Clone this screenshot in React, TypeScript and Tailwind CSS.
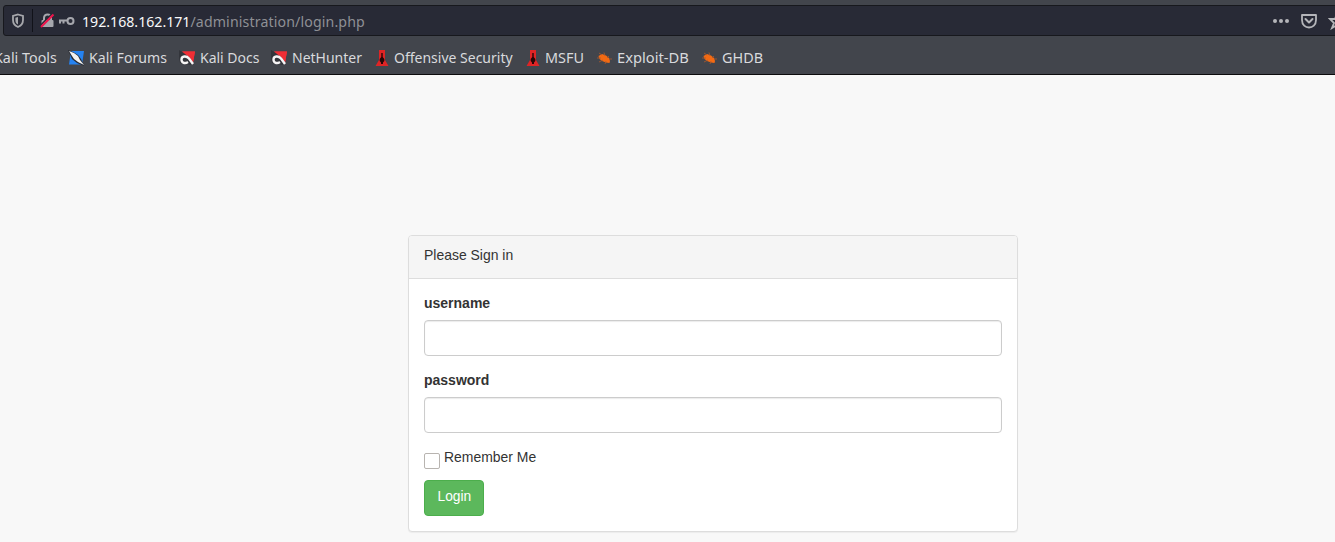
import type { ReactNode } from "react";

const KaliBlue = () => (
  <svg width="16" height="16" viewBox="0 0 16 16">
    <path d="M3 1H16L14 14.5H1Z" fill="#2583f2" />
    <path d="M0 0L5 2L10 5L13 9L16 16L9 13L4 9Z" fill="#272a31" />
    <path d="M1 1L6 3L10 6L12 10L16 15L10 12L6 9L4 6Z" fill="#f2f2f2" />
  </svg>
);

const KaliRed = () => (
  <svg width="16" height="16" viewBox="0 0 16 16">
    <path d="M3 1.5H16L14 13H2Z" fill="#f02e35" />
    <path d="M0 0L5 3L12 7L14 13L12 15L1 13L0 8Z" fill="#33353b" />
    <path d="M4 1.5H16L14 12L10 7L6 4Z" fill="#f02e35" />
    <path d="M14 14L10 8.5C7.5 5.5 2.5 6 2.5 9.5C2.5 13 6 14 9 12" fill="none" stroke="#f6f4f5" strokeWidth="2.4" />
  </svg>
);

const Tower = () => (
  <svg width="14" height="18" viewBox="0 0 14 18">
    <path d="M4 1H10V11L13.5 17H.5L4 11Z" fill="#df2425" />
    <path d="M6.3 4H7.7V8L9.3 10V12L8 13.5V15H6V13.5L4.7 12V10L6.3 8Z" fill="#260708" />
  </svg>
);

const Bug = () => (
  <svg width="15" height="14" viewBox="0 0 15 14">
    <path d="M1.5 5L5 3L9 4.5L12 7L13 10L12.5 12L9 11.5L5 10L2.5 8Z" fill="#f36a13" />
    <path d="M2 2L5 4M7 1.5L8 5M12 5L10 7M12 8L15 8M0 7L4 7M2 11L6 9M8 13L9 10" stroke="#ad592c" strokeWidth=".8" />
  </svg>
);

function Bookmark({ icon, label, box, textBox }: { icon?: ReactNode; label: string; box: string; textBox: string }) {
  return (
    <div className={`flex h-full shrink-0 items-center ${box}`}>
      {icon && <span className="flex w-[21px] shrink-0 items-center">{icon}</span>}
      <span className={`inline-block origin-left whitespace-nowrap ${textBox}`}>{label}</span>
    </div>
  );
}

export default function App() {
  return (
    <div className="h-[542px] w-full overflow-hidden bg-[#f8f8f8] font-['Liberation_Sans',sans-serif] text-[14px] text-[#333]">
      <header className="h-[75px] overflow-hidden border-b border-[#0c0c0d] bg-[#42454c] pt-[5px] font-['Noto_Sans',sans-serif] text-[#d9dadd]">
        <div className="ml-[3px] flex h-[31px] w-[1360px] items-center rounded-[3px] border border-[#17181d] bg-[#282a36]">
          <svg className="ml-[7px] shrink-0" width="14" height="16" viewBox="0 0 14 16" fill="none">
            <path d="M7 1.5L12 3V7C12 10.5 10 12.8 7 14C4 12.8 2 10.5 2 7V3Z" stroke="#a6a7ab" strokeWidth="1.8" />
            <path d="M7 4V11.5C5 10.5 4.4 9 4.4 7V4.8Z" fill="#a6a7ab" />
          </svg>
          <span className="ml-[7px] h-[23px] w-px shrink-0 bg-[#111219]" />
          <svg className="ml-[7px] shrink-0" width="16" height="16" viewBox="0 0 16 16" fill="none">
            <path d="M4 7V5C4 .2 11 .2 11 5V7" stroke="#a6a7ad" strokeWidth="2" />
            <rect x="1.5" y="7" width="12" height="7" rx="1" fill="#a6a7ad" />
            <path d="M-.2 13L12.5 .3" stroke="#282a36" strokeWidth="1.5" />
            <path d="M1 14L13.5 1.5" stroke="#f0134b" strokeWidth="2" />
          </svg>
          <svg className="ml-[2px] shrink-0" width="17" height="12" viewBox="0 0 17 12" fill="none" stroke="#a6a7ad">
            <circle cx="12.5" cy="6" r="3" strokeWidth="2" />
            <path d="M10 5.5H1M2 6V8.5M5.5 6V8.5" strokeWidth="2" />
          </svg>
          <span className="ml-[7px] w-[1190px] shrink-0 whitespace-nowrap text-[15px] text-[#8f9095]">
            <span className="inline-block origin-left translate-y-px scale-x-[0.943]"><span className="text-[#f9f9fa]">192.168.162.171</span><span className="tracking-[0.14px]">/administration/login.php</span></span>
          </span>
          <svg className="shrink-0" width="18" height="6" viewBox="0 0 18 6" fill="#b5b6ba">
            <circle cx="3" cy="3" r="2" /><circle cx="9" cy="3" r="2" /><circle cx="15" cy="3" r="2" />
          </svg>
          <svg className="ml-[10px] shrink-0" width="18" height="16" viewBox="0 0 18 16" fill="none" stroke="#b5b6ba" strokeWidth="1.8" strokeLinejoin="round">
            <path d="M2 2H16V7C16 17 2 17 2 7Z" /><path d="M5.5 6L9 9.5L12.5 6" strokeWidth="2" strokeLinecap="round" />
          </svg>
          <svg className="ml-[10px] shrink-0" width="18" height="18" viewBox="0 0 18 18" fill="none" stroke="#b5b6ba" strokeWidth="1.8">
            <path d="M9 2L11 7L16 7L12 11L14 16L9 13L4 16L6 11L2 7L7 7Z" />
          </svg>
        </div>
        <nav className="flex h-[38px] items-center pt-[5px] text-[15px]">
          <Bookmark label="Kali Tools" box="-ml-[6px] w-[74px]" textBox="scale-x-[0.955]" />
          <Bookmark icon={<KaliBlue />} label="Kali Forums" box="w-[111px]" textBox="scale-x-[0.94]" />
          <Bookmark icon={<KaliRed />} label="Kali Docs" box="w-[92px]" textBox="scale-x-[0.933]" />
          <Bookmark icon={<KaliRed />} label="NetHunter" box="w-[104px]" textBox="scale-x-[0.933]" />
          <Bookmark icon={<Tower />} label="Offensive Security" box="w-[151px]" textBox="-ml-[2px] scale-x-[0.933]" />
          <Bookmark icon={<Tower />} label="MSFU" box="w-[71px]" textBox="-ml-[2px] scale-x-[0.96]" />
          <Bookmark icon={<Bug />} label="Exploit-DB" box="w-[105px]" textBox="-ml-px scale-x-[0.98]" />
          <Bookmark icon={<Bug />} label="GHDB" box="w-[70px]" textBox="-ml-px scale-x-[0.96]" />
        </nav>
      </header>
      <main className="flex pl-[408px] pt-[160px]">
        <section className="h-[297px] w-[610px] rounded-[4px] border border-[#ddd] bg-white shadow-[0_1px_1px_rgba(0,0,0,0.05)]">
          <h1 className="h-[43px] rounded-t-[3px] border-b border-[#ddd] bg-[#f5f5f5] px-[15px] pt-[9px] text-[15px] leading-5">
            <span className="inline-block origin-left scale-x-[0.93]">Please Sign in</span>
          </h1>
          <form className="px-[15px] pt-[14px]" onSubmit={(e) => e.preventDefault()}>
            <label htmlFor="username" className="block h-[27px] font-bold leading-5">username</label>
            <input id="username" className="block h-[36px] w-full rounded-[4px] border border-[#ccc] bg-white px-3 shadow-[inset_0_1px_1px_rgba(0,0,0,0.08)]" />
            <label htmlFor="password" className="mt-[14px] block h-[27px] font-bold leading-5">password</label>
            <input id="password" type="password" className="block h-[36px] w-full rounded-[4px] border border-[#ccc] bg-white px-3 shadow-[inset_0_1px_1px_rgba(0,0,0,0.08)]" />
            <label className="mt-[14px] flex h-[32px] items-start gap-[4px] text-[15px] leading-5">
              <input type="checkbox" className="mt-[6px] h-[16px] w-[16px] appearance-none rounded-[2px] border border-[#b8b4b0] bg-white" />
              <span className="inline-block origin-left scale-x-[0.93]">Remember Me</span>
            </label>
            <button className="mt-px flex h-[36px] w-[60px] justify-center rounded-[4px] border border-[#4cae4c] bg-[#5cb85c] pt-[5px] text-[15px] leading-5 text-white">
              <span className="inline-block scale-x-[0.92]">Login</span>
            </button>
          </form>
        </section>
      </main>
    </div>
  );
}
